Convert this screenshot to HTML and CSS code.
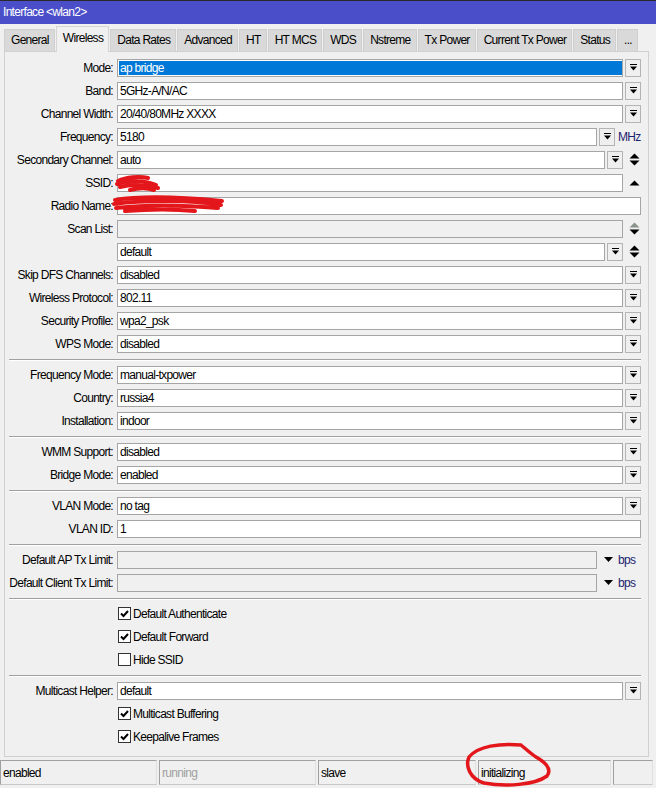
FILE: index.html
```html
<!DOCTYPE html>
<html>
<head>
<meta charset="utf-8">
<link rel="stylesheet" href="styles.css">
</head>
<body>
<div class="window">
  <div class="titlebar">Interface &lt;wlan2&gt;</div>
  <div class="tabs">
    <div class="tab">General</div>
    <div class="tab active">Wireless</div>
    <div class="tab">Data Rates</div>
    <div class="tab">Advanced</div>
    <div class="tab">HT</div>
    <div class="tab">HT MCS</div>
    <div class="tab">WDS</div>
    <div class="tab">Nstreme</div>
    <div class="tab">Tx Power</div>
    <div class="tab">Current Tx Power</div>
    <div class="tab">Status</div>
    <div class="tab">...</div>
  </div>
  <div class="panel">
    <div class="row"><div class="lbl">Mode:</div><div class="field"><span class="sel">ap bridge</span></div><div class="dd"><svg width="7" height="7" viewBox="0 0 7 7"><rect x="0" y="0" width="7" height="1" fill="#000"/><path d="M0 2.5H7L3.5 6.5Z" fill="#000"/></svg></div></div>
    <div class="row"><div class="lbl">Band:</div><div class="field">5GHz-A/N/AC</div><div class="dd"><svg width="7" height="7" viewBox="0 0 7 7"><rect x="0" y="0" width="7" height="1" fill="#000"/><path d="M0 2.5H7L3.5 6.5Z" fill="#000"/></svg></div></div>
    <div class="row"><div class="lbl">Channel Width:</div><div class="field">20/40/80MHz XXXX</div><div class="dd"><svg width="7" height="7" viewBox="0 0 7 7"><rect x="0" y="0" width="7" height="1" fill="#000"/><path d="M0 2.5H7L3.5 6.5Z" fill="#000"/></svg></div></div>
    <div class="row"><div class="lbl">Frequency:</div><div class="field">5180</div><div class="dd"><svg width="7" height="7" viewBox="0 0 7 7"><rect x="0" y="0" width="7" height="1" fill="#000"/><path d="M0 2.5H7L3.5 6.5Z" fill="#000"/></svg></div><div class="unit">MHz</div></div>
    <div class="row"><div class="lbl">Secondary Channel:</div><div class="field">auto</div><div class="dd"><svg width="7" height="7" viewBox="0 0 7 7"><rect x="0" y="0" width="7" height="1" fill="#000"/><path d="M0 2.5H7L3.5 6.5Z" fill="#000"/></svg></div><div class="arrows"><svg width="11" height="13" viewBox="0 0 11 13"><path d="M0.5 5.5L5.5 0.5L10.5 5.5Z" fill="#000"/><path d="M0.5 7.5H10.5L5.5 12.5Z" fill="#000"/></svg></div></div>
    <div class="row"><div class="lbl">SSID:</div><div class="field"></div><div class="arrows wide"><svg width="11" height="6" viewBox="0 0 11 6"><path d="M0.5 5.5L5.5 0.5L10.5 5.5Z" fill="#000"/></svg></div></div>
    <div class="row"><div class="lbl">Radio Name:</div><div class="field"></div></div>
    <div class="row"><div class="lbl">Scan List:</div><div class="field disabled"></div><div class="arrows wide"><svg width="11" height="13" viewBox="0 0 11 13"><path d="M0.5 5.5L5.5 0.5L10.5 5.5Z" fill="#8a948a"/><path d="M0.5 7.5H10.5L5.5 12.5Z" fill="#000"/></svg></div></div>
    <div class="row"><div class="lbl"></div><div class="field">default</div><div class="dd"><svg width="7" height="7" viewBox="0 0 7 7"><rect x="0" y="0" width="7" height="1" fill="#000"/><path d="M0 2.5H7L3.5 6.5Z" fill="#000"/></svg></div><div class="arrows"><svg width="11" height="13" viewBox="0 0 11 13"><path d="M0.5 5.5L5.5 0.5L10.5 5.5Z" fill="#000"/><path d="M0.5 7.5H10.5L5.5 12.5Z" fill="#000"/></svg></div></div>
    <div class="row"><div class="lbl">Skip DFS Channels:</div><div class="field">disabled</div><div class="dd"><svg width="7" height="7" viewBox="0 0 7 7"><rect x="0" y="0" width="7" height="1" fill="#000"/><path d="M0 2.5H7L3.5 6.5Z" fill="#000"/></svg></div></div>
    <div class="row"><div class="lbl">Wireless Protocol:</div><div class="field">802.11</div><div class="dd"><svg width="7" height="7" viewBox="0 0 7 7"><rect x="0" y="0" width="7" height="1" fill="#000"/><path d="M0 2.5H7L3.5 6.5Z" fill="#000"/></svg></div></div>
    <div class="row"><div class="lbl">Security Profile:</div><div class="field">wpa2_psk</div><div class="dd"><svg width="7" height="7" viewBox="0 0 7 7"><rect x="0" y="0" width="7" height="1" fill="#000"/><path d="M0 2.5H7L3.5 6.5Z" fill="#000"/></svg></div></div>
    <div class="row"><div class="lbl">WPS Mode:</div><div class="field">disabled</div><div class="dd"><svg width="7" height="7" viewBox="0 0 7 7"><rect x="0" y="0" width="7" height="1" fill="#000"/><path d="M0 2.5H7L3.5 6.5Z" fill="#000"/></svg></div></div>
    <div class="sep"></div>
    <div class="row"><div class="lbl">Frequency Mode:</div><div class="field">manual-txpower</div><div class="dd"><svg width="7" height="7" viewBox="0 0 7 7"><rect x="0" y="0" width="7" height="1" fill="#000"/><path d="M0 2.5H7L3.5 6.5Z" fill="#000"/></svg></div></div>
    <div class="row"><div class="lbl">Country:</div><div class="field">russia4</div><div class="dd"><svg width="7" height="7" viewBox="0 0 7 7"><rect x="0" y="0" width="7" height="1" fill="#000"/><path d="M0 2.5H7L3.5 6.5Z" fill="#000"/></svg></div></div>
    <div class="row"><div class="lbl">Installation:</div><div class="field">indoor</div><div class="dd"><svg width="7" height="7" viewBox="0 0 7 7"><rect x="0" y="0" width="7" height="1" fill="#000"/><path d="M0 2.5H7L3.5 6.5Z" fill="#000"/></svg></div></div>
    <div class="sep"></div>
    <div class="row"><div class="lbl">WMM Support:</div><div class="field">disabled</div><div class="dd"><svg width="7" height="7" viewBox="0 0 7 7"><rect x="0" y="0" width="7" height="1" fill="#000"/><path d="M0 2.5H7L3.5 6.5Z" fill="#000"/></svg></div></div>
    <div class="row"><div class="lbl">Bridge Mode:</div><div class="field">enabled</div><div class="dd"><svg width="7" height="7" viewBox="0 0 7 7"><rect x="0" y="0" width="7" height="1" fill="#000"/><path d="M0 2.5H7L3.5 6.5Z" fill="#000"/></svg></div></div>
    <div class="sep"></div>
    <div class="row"><div class="lbl">VLAN Mode:</div><div class="field">no tag</div><div class="dd"><svg width="7" height="7" viewBox="0 0 7 7"><rect x="0" y="0" width="7" height="1" fill="#000"/><path d="M0 2.5H7L3.5 6.5Z" fill="#000"/></svg></div></div>
    <div class="row"><div class="lbl">VLAN ID:</div><div class="field">1</div></div>
    <div class="sep"></div>
    <div class="row"><div class="lbl">Default AP Tx Limit:</div><div class="field disabled"></div><div class="tri"><svg width="9" height="5" viewBox="0 0 9 5"><path d="M0 0H9L4.5 5Z" fill="#000"/></svg></div><div class="unit bps">bps</div></div>
    <div class="row"><div class="lbl">Default Client Tx Limit:</div><div class="field disabled"></div><div class="tri"><svg width="9" height="5" viewBox="0 0 9 5"><path d="M0 0H9L4.5 5Z" fill="#000"/></svg></div><div class="unit bps">bps</div></div>
    <div class="sep"></div>
    <div class="row check"><div class="cb"><svg width="9" height="9" viewBox="0 0 9 9"><path d="M1 4.5L3.5 7L8 2" stroke="#000" stroke-width="2" fill="none"/></svg></div>Default Authenticate</div>
    <div class="row check"><div class="cb"><svg width="9" height="9" viewBox="0 0 9 9"><path d="M1 4.5L3.5 7L8 2" stroke="#000" stroke-width="2" fill="none"/></svg></div>Default Forward</div>
    <div class="row check"><div class="cb"></div>Hide SSID</div>
    <div class="sep"></div>
    <div class="row"><div class="lbl">Multicast Helper:</div><div class="field">default</div><div class="dd"><svg width="7" height="7" viewBox="0 0 7 7"><rect x="0" y="0" width="7" height="1" fill="#000"/><path d="M0 2.5H7L3.5 6.5Z" fill="#000"/></svg></div></div>
    <div class="row check"><div class="cb"><svg width="9" height="9" viewBox="0 0 9 9"><path d="M1 4.5L3.5 7L8 2" stroke="#000" stroke-width="2" fill="none"/></svg></div>Multicast Buffering</div>
    <div class="row check"><div class="cb"><svg width="9" height="9" viewBox="0 0 9 9"><path d="M1 4.5L3.5 7L8 2" stroke="#000" stroke-width="2" fill="none"/></svg></div>Keepalive Frames</div>
  </div>
  <div class="statusbar">
    <div class="cell c1">enabled</div>
    <div class="cell c2 dim">running</div>
    <div class="cell c3">slave</div>
    <div class="cell c4">initializing</div>
    <div class="cell c5"></div>
  </div>
  <svg class="marks" width="656" height="788" viewBox="0 0 656 788">
    <g fill="none" stroke="#e3161b" stroke-linecap="round" stroke-linejoin="round">
      <path d="M118 181 C126 177 140 176 148 178 M117 184 C128 180 146 180 156 185 M120 187 C132 184 146 185 158 188 M130 190 C138 188 148 188 154 190" stroke-width="4"/>
      <path d="M115 200 C140 196 180 197 222 201 M114 204 C145 200 190 200 221 205 M116 208 C150 204 185 205 218 208 M125 211 C150 209 175 209 195 211" stroke-width="4"/>
      <path d="M521 745 C500 743 478 746 469 757 C465 766 470 779 484 783 C505 787 535 785 547 776 C553 768 543 761 536 757 C530 753 526 749 521 745" stroke-width="3.5"/>
    </g>
  </svg>
</div>
</body>
</html>
```
FILE: styles.css
```css
* { box-sizing: border-box; }
html, body { margin: 0; padding: 0; }
body {
  background: #f0f0f0;
  font-family: "Liberation Sans", Arial, sans-serif;
  font-size: 12px;
  letter-spacing: -0.7px;
  color: #000;
  width: 656px;
  height: 788px;
  overflow: hidden;
}
.window { position: relative; width: 656px; height: 788px; }
.titlebar {
  height: 24px;
  background: #4a4fc9;
  border-top: 1px solid #2a2a2a;
  color: #fff;
  padding-left: 3px;
  line-height: 22px;
  font-size: 12px;
}
.tabs {
  display: flex;
  align-items: flex-end;
  height: 27px;
  padding-left: 4px;
}
.tab {
  height: 22px;
  line-height: 21px;
  padding: 0 5px 0 6px;
  background: #d9d9d9;
  border: 1px solid #cfcfcf;
  border-bottom: none;
  margin-right: 1px;
  white-space: nowrap;
}
.tab.active {
  height: 26px;
  background: #f0f0f0;
  border-color: #d5d5d5;
  line-height: 23px;
  position: relative;
  top: 1px;
}
.panel {
  margin: 0 7px 0 4px;
  border: 1px solid #d0d0d0;
  padding: 4px 7px 8px 0;
  background: #f0f0f0;
}
.row {
  display: flex;
  align-items: center;
  height: 23px;
}
.lbl {
  width: 112px;
  flex: none;
  text-align: right;
  padding-right: 4px;
  white-space: nowrap;
}
.field {
  flex: 1;
  height: 18px;
  border: 1px solid #a5a5a5;
  background: #fff;
  padding-left: 2px;
  line-height: 16px;
  white-space: nowrap;
}
.field.disabled { background: #f0f0f0; }
.sel {
  display: block;
  background: #0078d7;
  color: #fff;
  margin: 1px 0 0 -1px;
  line-height: 14px;
  height: 14px;
  padding-left: 1px;
}
.dd {
  flex: none;
  width: 16px;
  height: 18px;
  margin-left: 2px;
  border: 1px solid #b4b4b4;
  background: #efefef;
  display: flex;
  align-items: center;
  justify-content: center;
}
.arrows {
  flex: none;
  width: 18px;
  display: flex;
  justify-content: center;
  align-items: center;
}
.arrows svg { margin-left: 4px; }
.unit {
  flex: none;
  width: 26px;
  padding-left: 3px;
  color: #1b1f6e;
}
.tri {
  flex: none;
  width: 18px;
  display: flex;
  justify-content: center;
  padding-left: 4px;
}
.sep {
  height: 8px;
  margin-left: 4px;
  border-bottom: 1px solid #a0a0a0;
  position: relative;
  top: -3px;
}
.sep::after {
  content: "";
  display: block;
  height: 1px;
  background: #fff;
  position: relative;
  top: 8px;
}
.check { padding-left: 113px; }
.cb {
  width: 13px;
  height: 13px;
  border: 1px solid #333;
  background: #fff;
  margin-right: 2px;
  display: flex;
  align-items: center;
  justify-content: center;
}
.statusbar {
  display: flex;
  margin-top: 3px;
  padding-right: 3px;
  gap: 2px;
}
.cell {
  height: 25px;
  border: 1px solid #a0a0a0;
  border-right-color: #e0e0e0;
  border-bottom-color: #c8c8c8;
  line-height: 24px;
  padding-left: 2px;
  white-space: nowrap;
}
.c1 { width: 157px; }
.c2 { width: 157px; }
.c3 { width: 158px; }
.c4 { width: 133px; }
.c5 { flex: 1; }
.dim { color: #a0a0a0; }
.marks { position: absolute; left: 0; top: 0; pointer-events: none; }
```
